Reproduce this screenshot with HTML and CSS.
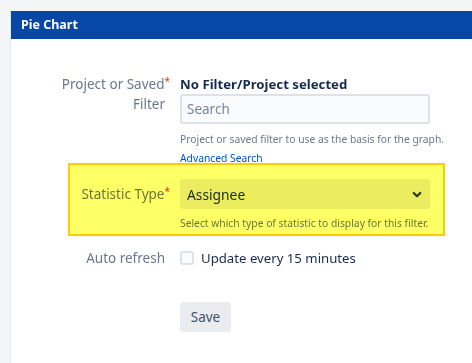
FILE: index.html
```html
<!DOCTYPE html>
<html>
<head>
<meta charset="utf-8">
<link rel="stylesheet" href="styles.css">
</head>
<body>
<div class="panel">
  <div class="panel-header">Pie Chart</div>
  <form class="form">
    <div class="row row-filter">
      <label class="label">Project or Saved<span class="req">*</span><br>Filter</label>
      <div class="field">
        <div class="selected">No Filter/Project selected</div>
        <div class="input">Search</div>
        <div class="desc desc-first">Project or saved filter to use as the basis for the graph.</div>
        <a class="link">Advanced Search</a>
      </div>
    </div>
    <div class="row row-stat">
      <label class="label label-select">Statistic Type<span class="req">*</span></label>
      <div class="field">
        <div class="select">
          <span>Assignee</span>
          <svg class="chev" width="26" height="26" viewBox="0 0 24 24"><path d="M8.292 10.293a1.009 1.009 0 0 0 0 1.419l2.939 2.965c.218.215.5.322.779.322s.556-.107.769-.322l2.93-2.955a1.01 1.01 0 0 0 0-1.419.987.987 0 0 0-1.406 0l-2.298 2.317-2.307-2.327a.99.99 0 0 0-1.406 0z" fill="#253858"/></svg>
        </div>
        <div class="desc desc-select">Select which type of statistic to display for this filter.</div>
      </div>
      <div class="highlight"></div>
    </div>
    <div class="row row-auto">
      <label class="label">Auto refresh</label>
      <div class="field check-field">
        <span class="checkbox"></span>
        <span class="check-label">Update every 15 minutes</span>
      </div>
    </div>
    <div class="row row-save">
      <div></div>
      <div class="field"><button type="button" class="btn">Save</button></div>
    </div>
  </form>
</div>
</body>
</html>
```

FILE: styles.css
```css
html, body {
  margin: 0;
  padding: 0;
  background: #f4f5f7;
  font-family: "Noto Sans", "Open Sans", sans-serif;
  color: #172b4d;
}
.panel {
  margin: 11px 0 0 10px;
  background: #fff;
  border-left: 1px solid #e4e6ea;
  height: 352px;
}
.panel-header {
  height: 28px;
  background: #0747a6;
  color: #fff;
  font-weight: 700;
  font-size: 12.5px;
  line-height: 28px;
  padding-left: 10px;
}
.form {
  padding-top: 35px;
}
.row {
  display: grid;
  grid-template-columns: 154px 260px;
  column-gap: 15px;
  position: relative;
}
.label {
  text-align: right;
  color: #6b778c;
  font-size: 13.5px;
  line-height: 20px;
  white-space: nowrap;
}
.req {
  color: #de350b;
  font-size: 10px;
  vertical-align: top;
  line-height: 14px;
  margin-right: -5px;
}
.field {
  width: 250px;
}
.selected {
  font-weight: 700;
  font-size: 13.2px;
  line-height: 20px;
  white-space: nowrap;
}
.input {
  box-sizing: border-box;
  height: 30px;
  border: 2px solid #dfe1e6;
  border-radius: 3px;
  background: #fafbfc;
  color: #7a869a;
  font-size: 13.5px;
  line-height: 26px;
  padding-left: 5px;
}
.desc {
  color: #6b778c;
  font-size: 10.3px;
  line-height: 16px;
  white-space: nowrap;
}
.desc-first {
  margin-top: 7px;
}
.link {
  display: block;
  color: #0052cc;
  font-size: 10.3px;
  line-height: 16px;
  margin-top: 3px;
}
.row-stat {
  margin-top: 13px;
}
.label-select {
  padding-top: 5px;
}
.select {
  box-sizing: border-box;
  height: 30px;
  background: #ebecf0;
  border-radius: 3px;
  display: flex;
  align-items: center;
  justify-content: space-between;
  padding: 0 0 0 7px;
  font-size: 13.8px;
}
.desc-select {
  margin-top: 6px;
}
.highlight {
  position: absolute;
  left: 57px;
  top: -16px;
  width: 373px;
  height: 69px;
  background: #ffff66;
  border: 2px solid #ffcc00;
  mix-blend-mode: multiply;
  pointer-events: none;
}
.row-auto {
  margin-top: 17px;
}
.check-field {
  display: flex;
  align-items: center;
  gap: 7px;
}
.checkbox {
  box-sizing: border-box;
  width: 14px;
  height: 14px;
  border: 2px solid #dfe1e6;
  border-radius: 3px;
  background: #fafbfc;
}
.check-label {
  font-size: 13.2px;
  line-height: 20px;
}
.row-save {
  margin-top: 34px;
}
.btn {
  height: 30px;
  width: 51px;
  border: 0;
  border-radius: 3px;
  background: #ebecf0;
  color: #42526e;
  font-family: inherit;
  font-size: 13.5px;
  padding: 0;
}
```
